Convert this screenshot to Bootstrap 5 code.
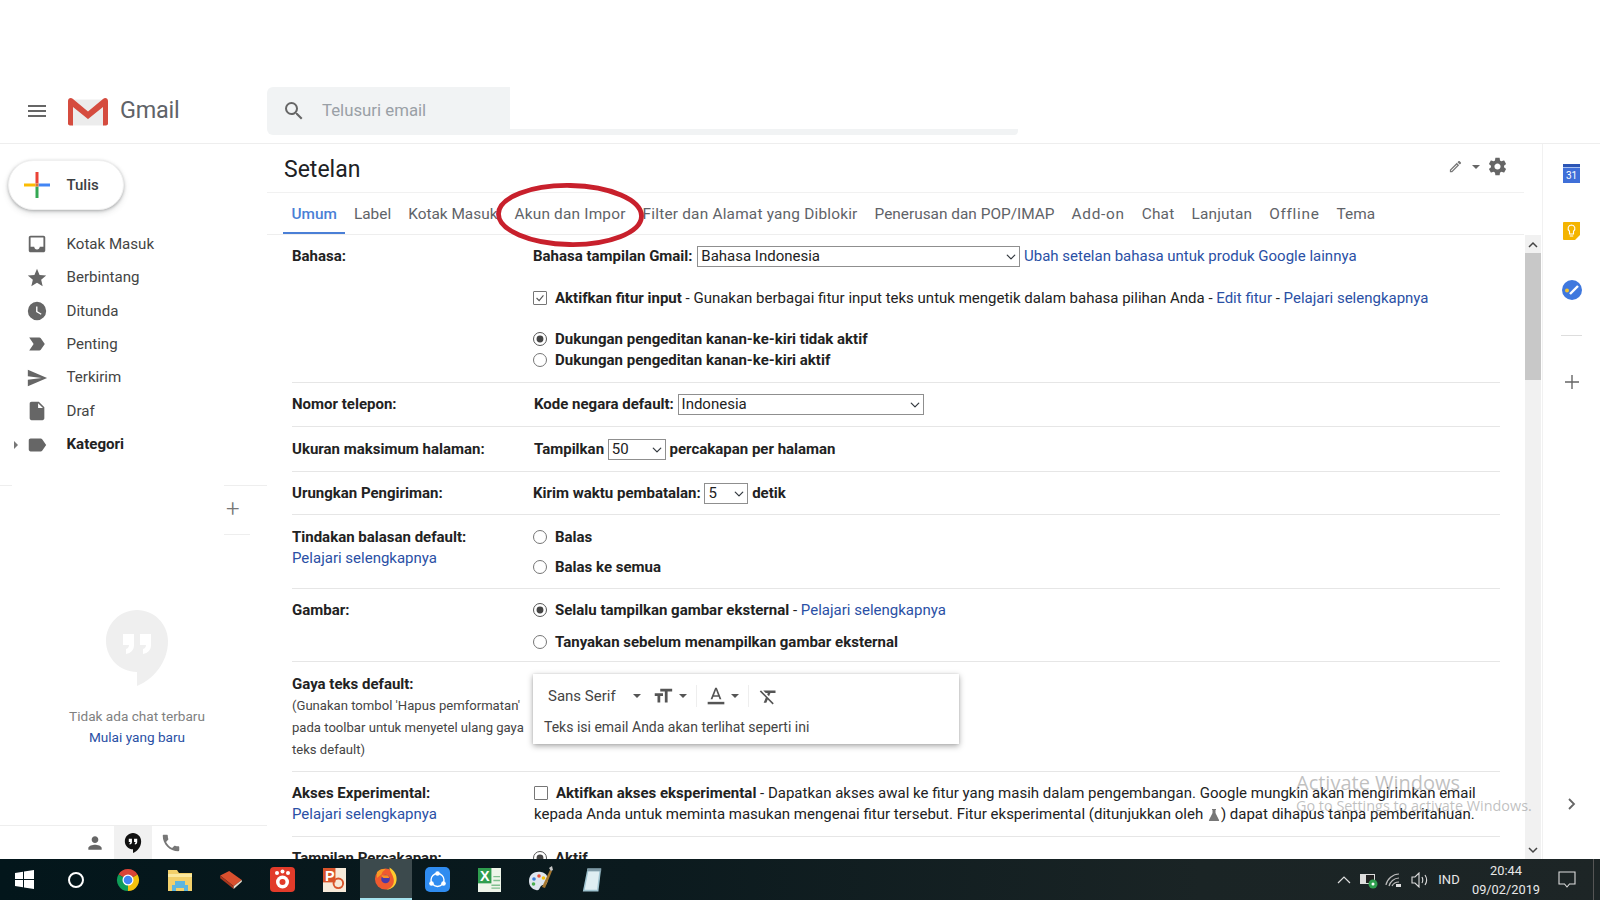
<!DOCTYPE html>
<html lang="id">
<head>
<meta charset="UTF-8">
<title>Setelan - Gmail</title>
<link href="https://cdn.jsdelivr.net/npm/bootstrap@5.3.3/dist/css/bootstrap.min.css" rel="stylesheet">
<style>
  html, body { height: 921px; overflow: hidden; }
  body { font-family: Roboto, "Liberation Sans", sans-serif; font-size: 15px; color: #222; background: #fff; position: relative; }
  a { color: #2a50a5; text-decoration: none; }

  .top-gap { height: 72px; }
  .gm-head { height: 72px; border-bottom: 1px solid #eee; padding-top: 15px; }
  .brand-box { width: 267px; padding-left: 25px; height: 48px; }
  .brand-name { font-size: 23.4px; color: #5f6368; margin-left: 12px; letter-spacing: -.2px; }
  .logo-m { margin-left: 19px; }
  .search-box { width: 751px; height: 48px; }
  .search-main { width: 243px; height: 48px; background: #f1f3f4; border-radius: 6px 0 0 6px; padding-left: 15px; color: #9aa0a6; font-size: 16.8px; gap: 16px; }
  .search-tail { flex: 1; height: 6px; background: #f1f3f4; align-self: flex-end; border-radius: 0 0 4px 0; }

  .gm-main { height: 715px; overflow: hidden; }
  .side-left { width: 267px; flex: none; }
  .side-left > * { flex: none; }
  .compose-btn { width: 116px; height: 50px; margin: 16px 0 17.500px 8px; border-radius: 25px; background: #fff; border: 1px solid #f0f0f0; box-shadow: 0 1px 3px rgba(60,64,67,.35), 0 3px 6px rgba(60,64,67,.15); font-size: 15px; color: #3c4043; padding: 0 0 0 15px; gap: 16.500px; font-weight: 500; }
  .compose-btn:hover { background: #fff; }
  .side-item { height: 33.4px; color: #444; font-size: 15.1px; padding-left: 26px; position: relative; gap: 18.500px; }
  .side-item svg { fill: #666; flex: none; }
  .side-item.fw-bold { color: #222; }
  .side-caret { position: absolute; left: 14px; top: 13px; border-left: 4px solid #777; border-top: 4px solid transparent; border-bottom: 4px solid transparent; }
  .side-rule { height: 49px; margin-top: 24px; }
  .rule-l { width: 12px; border-top: 1px solid #eee; }
  .rule-r { width: 43px; border-top: 1px solid #eee; margin-left: auto; position: relative; }
  .rule-plus { width: 26px; height: 49px; border-bottom: 1px solid #eee; padding-left: 2px; color: #777; font-size: 24px; font-weight: 300; line-height: 47px; }
  .chat-empty { margin-top: 76px; padding-left: 7px; text-align: center; font-size: 13.6px; color: #808080; }
  .chat-empty p { margin: 20px 0 0; line-height: 21px; }
  .chat-tabs { border-top: 1px solid #eee; height: 34px; margin-top: auto; padding-left: 76px; }
  .chat-tab { width: 38px; height: 34px; display: flex; align-items: center; justify-content: center; }
  .chat-tab.on { background: #f1f1f1; }

  .content-col { flex: 1; min-width: 0; }
  .title-bar { height: 49px; padding: 0 16px 0 17px; margin-right: 18px; border-bottom: 1px solid #f1f1f1; }
  .title-bar h1 { font-size: 23px; font-weight: 400; margin: 4px 0 0; color: #202124; }
  .title-tools { margin-top: -3px; }
  .tool-caret { border-top: 4px solid #666; border-left: 4px solid transparent; border-right: 4px solid transparent; margin: 0 7px 0 9px; }
  .tabs-bar { height: 42px; margin-right: 18px; padding-left: 16px; border-bottom: 1px solid #eee; flex-wrap: nowrap; }
  .tabs-bar .nav-link { color: #5f6368; font-size: 15.4px; padding: 0 8.5px; height: 41px; line-height: 42px; white-space: nowrap; }
  .tabs-bar .nav-link.tab-on { color: #4a7fd6; font-weight: 500; border-bottom: 2px solid #4a7fd6; }
  .tabs-bar .nav-link.tab-wide { letter-spacing: .2px; }
  .tabs-bar .nav-link.tab-wider { letter-spacing: .7px; }

  .scroll-area { height: 624px; overflow: hidden; }
  .rows-pane { width: 1208px; margin-left: 25px; flex: none; }
  .set-row { border-bottom: 1px solid #e6e6e6; padding: 11px 0; line-height: 21px; font-size: 15px; }
  .set-row b, .set-row .row-label { font-weight: 700; }
  .row-label { width: 241px; flex: none; color: #222; }
  .row-label a, .row-note { font-weight: 400; display: block; }
  .row-note { font-size: 13.1px; line-height: 22px; margin-top: 0; color: #444; }
  .row-value { flex: 1; min-width: 0; }
  .row-value.nudge { padding-left: 1px; }
  .row-page { padding-top: 12px; }
  .row-undo { padding-bottom: 10px; }
  .row-reply { padding: 12px 0 10px; }
  .row-pics { padding: 10.500px 0 8.500px; }
  .row-editor { padding: 12px 0 10px; }
  .gap-big { margin-top: 20.5px; }
  .gap-mid { margin-top: 9px; }
  .gap-pic { margin-top: 11px; }
  .pick-sel { display: inline-block; width: auto; height: 21px; padding: 0 16px 0 3px; font-size: 15px; line-height: 19px; border: 1px solid #8f8f8f; border-radius: 0; color: #222; background-position: right 3px center; background-size: 10px; vertical-align: top; }
  .sel-lang { width: 323px; margin: 0 0 0 1px; }
  .sel-phone { width: 246px; margin: 0; }
  .sel-page { width: 58px; margin: 0; }
  .sel-undo { width: 44px; margin: 0; }

  .form-check-input.tick { width: 14px; height: 14px; margin: 0 8px 0 0; vertical-align: -2px; border: 1px solid #767676; border-radius: 1px; background-color: #fff; }
  .form-check-input.dot { width: 14px; height: 14px; margin: 0 8px 0 0; vertical-align: -2px; border: 1px solid #767676; background-color: #fff; }
  .form-check-input.tick:checked { background-color: #fff; border-color: #767676; background-image: url("data:image/svg+xml,%3csvg xmlns='http://www.w3.org/2000/svg' viewBox='0 0 14 14'%3e%3cpath fill='none' stroke='%23555' stroke-width='1.3' d='M3 7l3 3 5-6'/%3e%3c/svg%3e"); }
  .form-check-input.dot:checked { background-color: #fff; border-color: #555; background-image: url("data:image/svg+xml,%3csvg xmlns='http://www.w3.org/2000/svg' viewBox='0 0 14 14'%3e%3ccircle cx='7' cy='7' r='4' fill='%23444'/%3e%3c/svg%3e"); background-size: 100%; }

  .editor-card { width: 426px; height: 70px; background: #fff; box-shadow: 0 2px 6px rgba(0,0,0,.35), 0 0 2px rgba(0,0,0,.1); margin-bottom: 16px; padding: 0 0 0 11px; }
  .editor-bar { height: 44px; padding-left: 4px; color: #444; font-size: 15px; }
  .editor-text { font-size: 14px; line-height: 18px; color: #444; }
  .ed-caret { border-top: 4px solid #555; border-left: 4px solid transparent; border-right: 4px solid transparent; }
  .ed-caret-font { margin-left: 17px; }
  .ed-size { margin-left: 11px; }
  .ed-caret-next { margin-left: 5px; }
  .ed-sep { width: 1px; height: 22px; background: #eee; margin: 0 9px; }

  .fake-bar { width: 16px; flex: none; margin-right: 1px; background: #f1f1f1; position: relative; }
  .bar-end { height: 18px; display: flex; align-items: center; justify-content: center; }
  .bar-thumb { height: 127px; background: #c8c8c8; }
  .bar-fill { height: 461px; }

  .side-right { width: 58px; flex: none; border-left: 1px solid #f1f1f1; padding-top: 20px; }
  .addon-slot { height: 58px; width: 100%; }
  .addon-rule { width: 21px; border-top: 1px solid #ddd; margin: -3px auto 38px; }
  .addon-next { margin-top: 407px; }

  .task-bar { height: 41px; background: linear-gradient(90deg, #03161b 0%, #0b1a1e 40%, #1a2425 75%, #1d2526 100%); color: #e8e8e8; font-size: 13px; position: relative; z-index: 3; }
  .task-app { width: 51.6px; height: 41px; display: flex; align-items: center; justify-content: center; flex: none; }
  .task-app:first-child { margin-left: -1px; }
  .task-app.on { background: #3c4a4d; border-bottom: 2px solid #a5e3ee; }
  .tray-box { margin-left: auto; }
  .tray-cell { display: flex; align-items: center; justify-content: center; flex: none; }
  .tray-w26 { width: 26px; }
  .tray-w24 { width: 24px; }
  .tray-lang { width: 35px; padding-right: 3px; }
  .tray-clock { width: 76px; text-align: center; line-height: 19px; font-size: 12.8px; margin-right: 2px; }
  .tray-note { width: 41px; }
  .tray-edge { width: 13px; }
  .tray-edge span { width: 1px; height: 41px; background: #555; }

  .mark-ring { position: absolute; left: 495px; top: 182px; z-index: 2; }
  .win-mark { position: absolute; left: 1296px; top: 773px; z-index: 2; font-family: "Open Sans", "Liberation Sans", sans-serif; color: rgba(130,130,130,.5); pointer-events: none; line-height: 1; white-space: nowrap; }
  .win-mark div:first-child { font-size: 20px; }
  .win-mark div:last-child { font-size: 14.4px; margin-top: 6px; }
</style>
</head>
<body>
  <div class="top-gap"></div>

  <header class="gm-head d-flex">
    <div class="brand-box d-flex align-items-center">
      <svg width="24" height="24" viewBox="0 0 24 24" fill="#666"><path d="M3 18h18v-2H3v2zm0-5h18v-2H3v2zm0-7v2h18V6H3z"/></svg>
      <svg class="logo-m" width="40" height="29" viewBox="0 0 40 28">
        <path fill="#ececec" d="M4 2h32v26H4z"/>
        <path fill="#d9d9d9" d="M8 7l12 11 12-11v4L20 22 8 11z"/>
        <path fill="#d54c3f" d="M0 3.500C0 1 2.600-.500 4.700 1.200L20 14 35.300 1.200C37.400-.500 40 1 40 3.500V26c0 1.100-.9 2-2 2h-3V9.500L20 21.500 5 9.500V28H2c-1.100 0-2-.9-2-2z"/>
      </svg>
      <span class="brand-name">Gmail</span>
    </div>
    <div class="search-box d-flex">
      <div class="search-main d-flex align-items-center">
        <svg width="24" height="24" viewBox="0 0 24 24" fill="#666"><path d="M15.500 14h-.79l-.28-.27A6.471 6.471 0 0 0 16 9.500 6.500 6.500 0 1 0 9.500 16c1.610 0 3.090-.59 4.230-1.570l.27.28v.79l5 4.990L20.490 19l-4.990-5zm-6 0C7.010 14 5 11.990 5 9.500S7.010 5 9.500 5 14 7.010 14 9.500 11.990 14 9.500 14z"/></svg>
        <span>Telusuri email</span>
      </div>
      <div class="search-tail"></div>
    </div>
  </header>

  <main class="gm-main d-flex">
    <aside class="side-left d-flex flex-column">
      <button class="btn compose-btn d-flex align-items-center" type="button">
        <svg width="26" height="26" viewBox="0 0 26 26">
          <path fill="#fbbc04" d="M0 11.500h11.500v3H0z"/>
          <path fill="#4285f4" d="M14.500 11.500H26v3H14.500z"/>
          <path fill="#ea4335" d="M11.500 0h3v11.500h-3z"/>
          <path fill="#34a853" d="M11.500 14.500h3V26h-3z"/>
          <path fill="#e0752e" d="M11.500 11.500h3v3h-3z"/>
        </svg>
        <span>Tulis</span>
      </button>
      <nav class="nav flex-column">
        <a class="side-item d-flex align-items-center" href="#"><svg width="22" height="22" viewBox="0 0 24 24"><path d="M19 3H4.990C3.880 3 3.010 3.890 3.010 5L3 19c0 1.100.88 2 1.990 2H19c1.100 0 2-.9 2-2V5c0-1.110-.9-2-2-2zm0 12h-4c0 1.660-1.350 3-3 3s-3-1.340-3-3H4.990V5H19v10z"/></svg>Kotak Masuk</a>
        <a class="side-item d-flex align-items-center" href="#"><svg width="22" height="22" viewBox="0 0 24 24"><path d="M12 17.270L18.180 21l-1.640-7.030L22 9.240l-7.190-.61L12 2 9.190 8.630 2 9.240l5.460 4.730L5.820 21z"/></svg>Berbintang</a>
        <a class="side-item d-flex align-items-center" href="#"><svg width="22" height="22" viewBox="0 0 24 24"><path fill-rule="evenodd" d="M12 2a10 10 0 1 0 0 20 10 10 0 0 0 0-20zm4.200 14.200L11 13V7h1.500v5.200l4.500 2.700-.8 1.300z"/></svg>Ditunda</a>
        <a class="side-item d-flex align-items-center" href="#"><svg width="22" height="22" viewBox="0 0 24 24"><path d="M3.500 18.990l11 .01c.67 0 1.270-.33 1.630-.84L20.500 12l-4.370-6.160c-.36-.51-.96-.84-1.630-.84l-11 .01L8.340 12 3.500 18.990z"/></svg>Penting</a>
        <a class="side-item d-flex align-items-center" href="#"><svg width="22" height="22" viewBox="0 0 24 24"><path d="M2.010 21L23 12 2.010 3 2 10l15 2-15 2z"/></svg>Terkirim</a>
        <a class="side-item d-flex align-items-center" href="#"><svg width="22" height="22" viewBox="0 0 24 24"><path fill-rule="evenodd" d="M14 2H6c-1.100 0-2 .9-2 2v16c0 1.100.9 2 2 2h12c1.100 0 2-.9 2-2V8l-6-6zm-.8 6.800V3.500l5.300 5.300h-5.300z"/></svg>Draf</a>
        <a class="side-item d-flex align-items-center fw-bold" href="#"><span class="side-caret"></span><svg width="22" height="22" viewBox="0 0 24 24"><path d="M17.630 5.840C17.270 5.330 16.670 5 16 5L5 5.010C3.900 5.010 3 5.900 3 7v10c0 1.100.9 1.990 2 1.990L16 19c.67 0 1.270-.33 1.630-.84L22 12l-4.370-6.160z"/></svg>Kategori</a>
      </nav>
      <div class="side-rule d-flex">
        <div class="rule-l"></div>
        <div class="rule-r"><div class="rule-plus">+</div></div>
      </div>
      <div class="chat-empty">
        <svg width="62" height="76" viewBox="0 0 62 76"><path fill="#efefef" d="M31 0C14 0 0 14 0 31s14 31 31 31v14c17-7 31-24 31-45C62 14 48 0 31 0z"/><path fill="#fff" d="M17 24h11v11c0 5-3 8-8 9v-5c2-.5 3-2 3-4h-6zM34 24h11v11c0 5-3 8-8 9v-5c2-.5 3-2 3-4h-6z"/></svg>
        <p>Tidak ada chat terbaru<br><a href="#">Mulai yang baru</a></p>
      </div>
      <div class="chat-tabs d-flex">
        <div class="chat-tab"><svg width="20" height="20" viewBox="0 0 24 24" fill="#666"><path d="M12 12c2.210 0 4-1.790 4-4s-1.790-4-4-4-4 1.790-4 4 1.790 4 4 4zm0 2c-2.670 0-8 1.340-8 4v2h16v-2c0-2.660-5.330-4-8-4z"/></svg></div>
        <div class="chat-tab on"><svg width="18" height="20" viewBox="0 0 62 76"><path fill="#111" d="M31 0C14 0 0 14 0 31s14 31 31 31v14c17-7 31-24 31-45C62 14 48 0 31 0z"/><path fill="#fff" d="M15 22h12v12c0 6-3 9-9 10v-6c2-.5 3-2 3-4h-6zM35 22h12v12c0 6-3 9-9 10v-6c2-.5 3-2 3-4h-6z"/></svg></div>
        <div class="chat-tab"><svg width="22" height="22" viewBox="0 0 24 24" fill="#777"><path d="M6.620 10.790c1.440 2.830 3.760 5.140 6.590 6.590l2.200-2.200c.27-.27.67-.36 1.020-.24 1.120.37 2.330.57 3.570.57.55 0 1 .45 1 1V20c0 .55-.45 1-1 1-9.390 0-17-7.610-17-17 0-.55.45-1 1-1h3.500c.55 0 1 .45 1 1 0 1.250.2 2.450.57 3.570.11.35.03.74-.25 1.020l-2.200 2.200z"/></svg></div>
      </div>
    </aside>

    <section class="content-col d-flex flex-column">
      <div class="title-bar d-flex align-items-center">
        <h1>Setelan</h1>
        <div class="title-tools ms-auto d-flex align-items-center">
          <svg width="15" height="15" viewBox="0 0 24 24" fill="#777"><path d="M3 17.250V21h3.750L17.810 9.940l-3.750-3.750L3 17.250zM5.920 19H5v-.92l9.060-9.060.92.92L5.920 19zM20.710 7.040c.39-.39.39-1.020 0-1.410l-2.340-2.340c-.2-.2-.45-.29-.71-.29s-.51.09-.7.29l-1.830 1.830 3.750 3.750 1.830-1.830z"/></svg>
          <span class="tool-caret"></span>
          <svg width="21" height="21" viewBox="0 0 24 24" fill="#666"><path d="M19.430 12.980c.04-.32.07-.64.07-.98s-.03-.66-.07-.98l2.110-1.650c.19-.15.24-.42.12-.64l-2-3.460c-.12-.22-.39-.3-.61-.22l-2.490 1c-.52-.4-1.080-.73-1.690-.98l-.38-2.650C14.460 2.180 14.250 2 14 2h-4c-.25 0-.46.18-.49.42l-.38 2.650c-.61.25-1.170.59-1.690.98l-2.490-1c-.23-.09-.49 0-.61.22l-2 3.460c-.13.22-.07.49.12.64l2.110 1.650c-.04.32-.07.65-.07.98s.03.66.07.98l-2.110 1.650c-.19.15-.24.42-.12.64l2 3.460c.12.22.39.3.61.22l2.490-1c.52.4 1.080.73 1.690.98l.38 2.650c.03.24.24.42.49.42h4c.25 0 .46-.18.49-.42l.38-2.650c.61-.25 1.170-.59 1.690-.98l2.490 1c.23.09.49 0 .61-.22l2-3.460c.12-.22.07-.49-.12-.64l-2.110-1.650zM12 15.500c-1.930 0-3.500-1.570-3.500-3.500s1.570-3.500 3.500-3.500 3.500 1.570 3.500 3.500-1.570 3.500-3.500 3.500z"/></svg>
        </div>
      </div>

      <ul class="nav tabs-bar">
        <li class="nav-item"><a class="nav-link tab-on" href="#">Umum</a></li>
        <li class="nav-item"><a class="nav-link" href="#">Label</a></li>
        <li class="nav-item"><a class="nav-link" href="#">Kotak Masuk</a></li>
        <li class="nav-item"><a class="nav-link tab-wide" href="#">Akun dan Impor</a></li>
        <li class="nav-item"><a class="nav-link tab-wide" href="#">Filter dan Alamat yang Diblokir</a></li>
        <li class="nav-item"><a class="nav-link" href="#">Penerusan dan POP/IMAP</a></li>
        <li class="nav-item"><a class="nav-link tab-wider" href="#">Add-on</a></li>
        <li class="nav-item"><a class="nav-link tab-wide" href="#">Chat</a></li>
        <li class="nav-item"><a class="nav-link tab-wide" href="#">Lanjutan</a></li>
        <li class="nav-item"><a class="nav-link tab-wider" href="#">Offline</a></li>
        <li class="nav-item"><a class="nav-link" href="#">Tema</a></li>
      </ul>

      <div class="scroll-area d-flex">
        <div class="rows-pane">
          <div class="set-row d-flex">
            <div class="row-label">Bahasa:</div>
            <div class="row-value">
              <div><b>Bahasa tampilan Gmail:</b>
                <select class="form-select pick-sel sel-lang"><option>Bahasa Indonesia</option></select>
                <a href="#">Ubah setelan bahasa untuk produk Google lainnya</a></div>
              <div class="gap-big"><input class="form-check-input tick" type="checkbox" checked><b>Aktifkan fitur input</b> - Gunakan berbagai fitur input teks untuk mengetik dalam bahasa pilihan Anda - <a href="#">Edit fitur</a> - <a href="#">Pelajari selengkapnya</a></div>
              <div class="gap-big"><input class="form-check-input dot" type="radio" name="rtl" checked><b>Dukungan pengeditan kanan-ke-kiri tidak aktif</b></div>
              <div><input class="form-check-input dot" type="radio" name="rtl"><b>Dukungan pengeditan kanan-ke-kiri aktif</b></div>
            </div>
          </div>
          <div class="set-row d-flex">
            <div class="row-label">Nomor telepon:</div>
            <div class="row-value nudge"><b>Kode negara default:</b>
              <select class="form-select pick-sel sel-phone"><option>Indonesia</option></select></div>
          </div>
          <div class="set-row row-page d-flex">
            <div class="row-label">Ukuran maksimum halaman:</div>
            <div class="row-value nudge"><b>Tampilkan</b>
              <select class="form-select pick-sel sel-page"><option>50</option></select>
              <b>percakapan per halaman</b></div>
          </div>
          <div class="set-row row-undo d-flex">
            <div class="row-label">Urungkan Pengiriman:</div>
            <div class="row-value"><b>Kirim waktu pembatalan:</b>
              <select class="form-select pick-sel sel-undo"><option>5</option></select>
              <b>detik</b></div>
          </div>
          <div class="set-row row-reply d-flex">
            <div class="row-label">Tindakan balasan default:<a href="#">Pelajari selengkapnya</a></div>
            <div class="row-value">
              <div><input class="form-check-input dot" type="radio" name="reply"><b>Balas</b></div>
              <div class="gap-mid"><input class="form-check-input dot" type="radio" name="reply"><b>Balas ke semua</b></div>
            </div>
          </div>
          <div class="set-row row-pics d-flex">
            <div class="row-label">Gambar:</div>
            <div class="row-value">
              <div><input class="form-check-input dot" type="radio" name="img" checked><b>Selalu tampilkan gambar eksternal</b> - <a href="#">Pelajari selengkapnya</a></div>
              <div class="gap-pic"><input class="form-check-input dot" type="radio" name="img"><b>Tanyakan sebelum menampilkan gambar eksternal</b></div>
            </div>
          </div>
          <div class="set-row row-editor d-flex">
            <div class="row-label">Gaya teks default:<span class="row-note">(Gunakan tombol 'Hapus pemformatan' pada toolbar untuk menyetel ulang gaya teks default)</span></div>
            <div class="row-value">
              <div class="editor-card">
                <div class="editor-bar d-flex align-items-center">
                  <span>Sans Serif</span>
                  <span class="ed-caret ed-caret-font"></span>
                  <svg class="ed-size" width="22" height="22" viewBox="0 0 24 24" fill="#555"><path d="M9 4v3h5v12h3V7h5V4H9zm-6 8h3v7h3v-7h3V9H3v3z"/></svg>
                  <span class="ed-caret ed-caret-next"></span>
                  <span class="ed-sep"></span>
                  <svg width="20" height="20" viewBox="0 0 24 24" fill="#555"><path d="M11 2L5.500 16h2.250l1.120-3h6.250l1.120 3h2.250L13 2h-2zm-1.380 9L12 4.670 14.380 11H9.620z"/><path d="M2 19h20v3H2z"/></svg>
                  <span class="ed-caret ed-caret-next"></span>
                  <span class="ed-sep"></span>
                  <svg width="21" height="21" viewBox="0 0 24 24" fill="#555"><path d="M3.270 5L2 6.270l6.970 6.970L6.500 19h3l1.570-3.660L16.730 21 18 19.730 3.550 5.270 3.270 5zM6 5v.18L8.820 8h2.400l-.72 1.680 2.100 2.100L14.210 8H20V5H6z"/></svg>
                </div>
                <div class="editor-text">Teks isi email Anda akan terlihat seperti ini</div>
              </div>
            </div>
          </div>
          <div class="set-row d-flex">
            <div class="row-label">Akses Experimental:<a href="#">Pelajari selengkapnya</a></div>
            <div class="row-value nudge"><input class="form-check-input tick" type="checkbox"><b>Aktifkan akses eksperimental</b> - Dapatkan akses awal ke fitur yang masih dalam pengembangan. Google mungkin akan mengirimkan email kepada Anda untuk meminta masukan mengenai fitur tersebut. Fitur eksperimental (ditunjukkan oleh <svg width="14" height="14" viewBox="0 0 14 14" fill="#777"><path d="M5 1h4v1H8.500v3L12 12c.3.6 0 1-.6 1H2.600c-.6 0-.9-.4-.6-1L5.500 5V2H5z"/></svg>) dapat dihapus tanpa pemberitahuan.</div>
          </div>
          <div class="set-row d-flex">
            <div class="row-label">Tampilan Percakapan:</div>
            <div class="row-value"><input class="form-check-input dot" type="radio" checked><b>Aktif</b></div>
          </div>
        </div>

        <div class="fake-bar ms-auto">
          <div class="bar-end"><svg width="10" height="7" viewBox="0 0 10 7"><path fill="none" stroke="#444" stroke-width="1.500" d="M1 6l4-4 4 4"/></svg></div>
          <div class="bar-thumb"></div>
          <div class="bar-fill"></div>
          <div class="bar-end"><svg width="10" height="7" viewBox="0 0 10 7"><path fill="none" stroke="#444" stroke-width="1.500" d="M1 1l4 4 4-4"/></svg></div>
        </div>
      </div>
    </section>

    <aside class="side-right d-flex flex-column align-items-center">
      <div class="addon-slot d-flex justify-content-center">
        <svg width="17" height="19" viewBox="0 0 17 19"><path fill="#3f6fd8" d="M0 2h17v17H0z"/><path fill="#2b55b5" d="M0 0h17v3H0z"/><path fill="#a9c1f0" d="M0 3h17v1H0z"/><text x="8.500" y="15" font-family="Roboto, sans-serif" font-size="10" fill="#fff" text-anchor="middle">31</text></svg>
      </div>
      <div class="addon-slot d-flex justify-content-center">
        <svg width="17" height="18" viewBox="0 0 17 18"><path fill="#f4b400" d="M1 0h16v13l-5 5H1c-.5 0-1-.5-1-1V1c0-.5.5-1 1-1z"/><path fill="none" stroke="#fff" stroke-width="1.100" d="M8.500 3a3.500 3.500 0 0 0-2 6.300V12h4V9.300a3.500 3.500 0 0 0-2-6.300zM6.800 14h3.400"/></svg>
      </div>
      <div class="addon-slot d-flex justify-content-center">
        <svg width="20" height="20" viewBox="0 0 20 20"><circle cx="10" cy="10" r="10" fill="#3f78de"/><path d="M8 14l8-8" stroke="#fff" stroke-width="2.400" fill="none"/><circle cx="5" cy="10.500" r="2" fill="#f4c430"/></svg>
      </div>
      <div class="addon-rule"></div>
      <svg width="16" height="16" viewBox="0 0 16 16"><path fill="#666" d="M7.300 1h1.400v6.300H15v1.400H8.700V15H7.300V8.700H1V7.300h6.300z"/></svg>
      <svg class="addon-next" width="10" height="14" viewBox="0 0 10 14"><path fill="none" stroke="#666" stroke-width="1.800" d="M2 2l5 5-5 5"/></svg>
    </aside>
  </main>

  <footer class="task-bar d-flex align-items-center">
    <div class="task-app"><svg width="19" height="19" viewBox="0 0 19 19" fill="#fff"><path d="M0 3l8-1.200v7.300H0zM9 1.600L19 0v9.100H9zM0 10h8v7.200L0 16zM9 10h10v9l-10-1.500z"/></svg></div>
    <div class="task-app"><svg width="18" height="18" viewBox="0 0 18 18"><circle cx="9" cy="9" r="7" fill="none" stroke="#fff" stroke-width="2"/></svg></div>
    <div class="task-app"><svg width="24" height="24" viewBox="0 0 24 24"><path fill="#db4437" d="M12 12L2.470 6.500A11 11 0 0 1 21.530 6.500Z"/><path fill="#f4c20d" d="M12 12L21.530 6.500A11 11 0 0 1 12 23Z"/><path fill="#0f9d58" d="M12 12L12 23A11 11 0 0 1 2.470 6.500Z"/><circle cx="12" cy="12" r="5.500" fill="#fff"/><circle cx="12" cy="12" r="4.300" fill="#4285f4"/></svg></div>
    <div class="task-app"><svg width="24" height="22" viewBox="0 0 24 22"><path fill="#f2d06b" d="M0 1h9l2 3h13v18H0z"/><path fill="#fbe9a0" d="M0 5h24v3H0z"/><path fill="#5bb5e0" d="M7 12h10v4h3v6h-4v-3H8v3H4v-6h3z"/></svg></div>
    <div class="task-app"><svg width="24" height="18" viewBox="0 0 26 20"><path fill="#d9502e" d="M1 5L11 0l14 10-9 7z"/><path fill="#a9371e" d="M1 5l15 12v3L1 8z"/><path fill="#e8e0d0" d="M16 17l9-7v2l-9 8z"/></svg></div>
    <div class="task-app"><svg width="25" height="25" viewBox="0 0 25 25"><rect width="25" height="25" rx="4" fill="#e23b2a"/><circle cx="12.500" cy="15" r="6.500" fill="#fff"/><circle cx="12.500" cy="15" r="3" fill="#e23b2a"/><circle cx="7" cy="6" r="2" fill="#fff"/><circle cx="12.500" cy="4.500" r="2" fill="#fff"/><circle cx="18" cy="6" r="2" fill="#fff"/></svg></div>
    <div class="task-app"><svg width="23" height="24" viewBox="0 0 24 25"><path fill="#f7ead9" d="M0 0h24v25H0z"/><path fill="#d9552b" d="M0 0h13v15H0z"/><text x="2" y="14" font-family="Liberation Sans, sans-serif" font-size="15" font-weight="700" fill="#fff">P</text><circle cx="16" cy="16" r="5" fill="none" stroke="#d9552b" stroke-width="2"/></svg></div>
    <div class="task-app on"><svg width="24" height="25" viewBox="0 0 25 25"><circle cx="12" cy="13" r="11" fill="#ef5a2f"/><path fill="#ffcb2e" d="M16 1c6 3 8 9 7.500 13-.5 6-5 10-11 10 6-1 9-6 8-11C19.500 8 17 6 16 1z"/><path fill="#f79a25" d="M3 6c3-3 6-4 9-3-2 1-4 3-4 5l-5 4z"/><circle cx="12" cy="13" r="4.500" fill="#4a3aa8"/><path fill="#ff8f1f" d="M8 9h6c1.500 1 2 2 1.500 3H10c-1.500-1-2-2-2-3z"/></svg></div>
    <div class="task-app"><svg width="25" height="25" viewBox="0 0 25 25"><rect width="25" height="25" rx="5" fill="#2f8cf0"/><circle cx="12.500" cy="13" r="6.500" fill="none" stroke="#fff" stroke-width="1.400"/><circle cx="12.500" cy="6.500" r="2.300" fill="#fff"/><circle cx="6.500" cy="16.500" r="2.300" fill="#fff"/><circle cx="18.500" cy="16.500" r="2.300" fill="#fff"/></svg></div>
    <div class="task-app"><svg width="23" height="24" viewBox="0 0 24 25"><path fill="#eef5ea" d="M0 0h24v25H0z"/><path fill="#2f9e4f" d="M0 0h14v16H0z"/><text x="2" y="14" font-family="Liberation Sans, sans-serif" font-size="15" font-weight="700" fill="#fff">X</text><path stroke="#7fbf8f" stroke-width="1.500" d="M14 18h9M14 21h9M16 9h7M16 13h7"/></svg></div>
    <div class="task-app"><svg width="26" height="27" viewBox="0 0 26 27"><path fill="#dfe6ee" d="M1 15C1 8 7 5 13 6c6 1 8 6 6 11-1 3-4 1-6 3s-1 5-5 4c-4-1-7-4-7-9z"/><circle cx="6" cy="13" r="1.800" fill="#3b7dd8"/><circle cx="11" cy="10" r="1.800" fill="#e8503a"/><circle cx="15.500" cy="12" r="1.800" fill="#f4c20d"/><circle cx="5.500" cy="18" r="1.800" fill="#4caf50"/><path fill="#a6772f" d="M14 21L22 4l2 1-7 17z"/><path fill="#c8c8c8" d="M21 2l3-2 1 4-2 1z"/></svg></div>
    <div class="task-app"><svg width="22" height="24" viewBox="0 0 24 25"><path fill="#9fc4d0" d="M7 0h15l-3 25H2z"/><path fill="#dfeef2" d="M8 3h12l-2.500 20H4z"/><path fill="#7f9aa6" d="M7 0h15v3H6.500z"/></svg></div>

    <div class="tray-box d-flex align-items-center">
      <div class="tray-cell tray-w26"><svg width="16" height="9" viewBox="0 0 16 9"><path fill="none" stroke="#ddd" stroke-width="1.200" d="M2 8l6-6 6 6"/></svg></div>
      <div class="tray-cell tray-w24"><svg width="20" height="18" viewBox="0 0 20 18"><path fill="#ddd" d="M1 3h15v10H1z"/><path fill="#222" d="M7 4h8v8H7z"/><circle cx="14" cy="13" r="4.500" fill="#2e9e4e"/><circle cx="14" cy="13" r="1.500" fill="#fff"/></svg></div>
      <div class="tray-cell tray-w26"><svg width="18" height="16" viewBox="0 0 18 16"><path fill="none" stroke="#bbb" stroke-width="1.200" d="M1 13C2 7 8 2 14 2M4 14c1-4 5-8 10-8M7 14c1-2 3-4 7-4"/><path fill="#ddd" d="M11 12h5v3h-5z"/></svg></div>
      <div class="tray-cell tray-w26"><svg width="18" height="16" viewBox="0 0 18 16"><path fill="none" stroke="#ddd" stroke-width="1.100" d="M1 5h3l4-4v14l-4-4H1zM11 5c1 2 1 4 0 6M14 3c2 3 2 7 0 10"/></svg></div>
      <div class="tray-cell tray-lang">IND</div>
      <div class="tray-cell tray-clock">20:44<br>09/02/2019</div>
      <div class="tray-cell tray-note"><svg width="18" height="17" viewBox="0 0 18 17"><path fill="none" stroke="#ddd" stroke-width="1.100" d="M1 1h16v12H11.500L9 16l-2.500-3H1z"/></svg></div>
      <div class="tray-cell tray-edge"><span></span></div>
    </div>
  </footer>

  <svg class="mark-ring" width="150" height="66" viewBox="0 0 150 66"><ellipse cx="75" cy="33" rx="71.500" ry="29.500" fill="none" stroke="#c8202c" stroke-width="4.800" transform="rotate(1 75 33)"/></svg>

  <div class="win-mark">
    <div>Activate Windows</div>
    <div>Go to Settings to activate Windows.</div>
  </div>
</body>
</html>
